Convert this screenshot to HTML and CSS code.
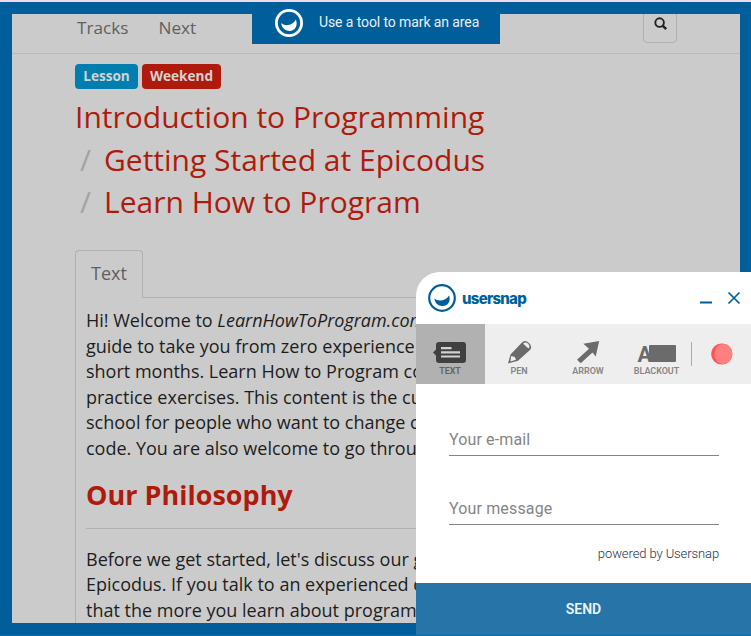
FILE: index.html
```html
<!DOCTYPE html>
<html lang="en">
<head>
<meta charset="utf-8">
<title>Introduction to Programming</title>
<link rel="stylesheet" href="styles.css">
</head>
<body>
<main class="page">
  <nav class="nav">
    <a>Tracks</a><a>Next</a>
    <button class="search" aria-label="Search"><svg width="14" height="14" viewBox="0 0 14 14"><circle cx="5.6" cy="5.6" r="4.3" fill="none" stroke="#222" stroke-width="1.9"/><path d="M8.6 8.6 12.2 12.2" stroke="#222" stroke-width="2.4"/></svg></button>
  </nav>
  <article class="content">
    <div class="badges"><span class="badge">Lesson</span><span class="badge red">Weekend</span></div>
    <h1 class="trail">
      <span>Introduction to Programming</span>
      <span><i>/</i>Getting Started at Epicodus</span>
      <span><i>/</i>Learn How to Program</span>
    </h1>
    <div class="tabs"><span class="tab">Text</span></div>
    <section class="text">
      <p>Hi! Welcome to <em>LearnHowToProgram.com</em><br>guide to take you from zero experience<br>short months. Learn How to Program co<br>practice exercises. This content is the cu<br>school for people who want to change c<br>code. You are also welcome to go throu</p>
      <h2>Our Philosophy</h2>
      <p>Before we get started, let's discuss our g<br>Epicodus. If you talk to an experienced d<br>that the more you learn about program</p>
    </section>
  </article>
</main>

<div class="hint">
  <svg width="28" height="28" viewBox="0 0 28 28"><circle cx="14" cy="14" r="12.6" fill="none" stroke="#fff" stroke-width="2.8"/><path d="M6.2 14.1C9 17.2 17.6 17.3 20.8 10.5C23.4 16.5 20 22 14.5 22C10 22 6.7 18.7 6.2 14.1Z" fill="#fff"/></svg>
  <span>Use a tool to mark an area</span>
</div>

<aside class="panel">
  <header class="head">
    <svg width="28" height="28" viewBox="0 0 28 28"><circle cx="14" cy="14" r="12.8" fill="none" stroke="#005f9a" stroke-width="2.2"/><path d="M6.4 14.5C9.5 17.5 17.8 17.3 21 11.5C23.2 17 20 22 14.5 22C10 22 6.8 19 6.4 14.5Z" fill="#005f9a"/></svg>
    <b>usersnap</b>
    <svg class="controls" width="42" height="16" viewBox="0 0 42 16" fill="none" stroke="#005f9a"><path d="M1 12.6H13" stroke-width="2"/><path d="M29.5 2.5 40.5 13.5M40.5 2.5 29.5 13.5" stroke-width="1.7"/></svg>
  </header>
  <div class="tools">
    <div class="tool on"><svg width="34" height="24" viewBox="0 0 34 24"><path d="M6 2H30Q33 2 33 5V20Q33 23 30 23H6Q3 23 3 20V15.5L0 12.5L3 9.5V5Q3 2 6 2Z" fill="#404040"/><path d="M8 8.2H18.5M8 12.3H27M8 16.5H27" stroke="#d2d2d2" stroke-width="2.2"/></svg>TEXT</div>
    <div class="tool"><svg width="34" height="24" viewBox="-1 0 34 24"><path d="M5 23.5 7.5 14.5 18.5 3Q22-.8 26 3Q30 7 26.7 10.3L15 20.8Z" fill="#6b6b6b"/><path d="M20.2 3.7Q22.5 1.2 25.1 3.7Q27.6 6.5 25.4 8.6Z" fill="#eee"/><path d="M8.2 16 11.8 17 13 19.8 7.4 21.6Z" fill="#eee"/></svg>PEN</div>
    <div class="tool"><svg width="34" height="24" viewBox="0 0 34 24"><path d="M12.3 3.8 28.2 1 24.7 16.5 21.5 12.6 9.7 23.2 6 19.8 18 8.7Z" fill="#6b6b6b"/></svg>ARROW</div>
    <div class="tool blackout"><span class="mark"><b>A</b><i></i></span>BLACKOUT</div>
    <span class="rule"></span>
    <svg class="dot" width="22" height="22" viewBox="0 0 22 22"><circle cx="10.8" cy="11" r="10.6" fill="#ff5555"/><ellipse cx="12.4" cy="11" rx="9" ry="10.2" fill="#ff8080"/></svg>
  </div>
  <form class="form">
    <div class="field">Your e-mail</div>
    <div class="field message">Your message</div>
    <div class="powered">powered by Usersnap</div>
  </form>
  <div class="send">SEND</div>
</aside>
</body>
</html>
```
FILE: styles.css
```css
* { box-sizing: border-box; }
body {
  margin: 0;
  width: 751px;
  height: 636px;
  overflow: hidden;
  position: relative;
  font-family: "Open Sans", sans-serif;
  background: linear-gradient(#efdbea 0 2px, #005f9a 2px 635px, #0a6cae 635px);
  padding: 14px 11px 13px 12px;
}
.page { height: 609px; background: #cbcbcb; overflow: hidden; }
.nav {
  height: 40px;
  border-bottom: 1px solid #bababa;
  padding: 0 63px 0 65px;
  display: flex;
  align-items: flex-start;
  gap: 30px;
  font-size: 17.2px;
  line-height: 27px;
  color: #606060;
}
.search {
  margin: -6px 0 0 auto;
  width: 34px;
  height: 35px;
  border: 1px solid #b0b0b0;
  border-radius: 4px;
  background: none;
  padding: 8px 0 0 9.5px;
  display: flex;
}
.content { margin-left: 63px; }
.badges { display: flex; gap: 4px; padding-top: 10px; }
.badge {
  width: 63px;
  height: 25px;
  border-radius: 4px;
  background: #007faf;
  color: #d2d2d2;
  font-size: 13.6px;
  font-weight: 700;
  line-height: 24px;
  text-align: center;
}
.badge.red { width: 79px; background: #ae1b0d; }
.trail {
  margin: 7px 0 0;
  font-size: 30px;
  font-weight: 400;
  line-height: 42.7px;
  color: #ae1b0d;
  white-space: nowrap;
}
.trail span { display: block; }
.trail i { display: inline-block; width: 29px; padding-left: 5px; font-style: normal; color: #a3a3a3; }
.tabs { margin-top: 26px; height: 48px; border-bottom: 1px solid #b0b0b0; }
.tab {
  display: block;
  width: 68px;
  height: 48px;
  border: 1px solid #b0b0b0;
  border-bottom: 0;
  border-radius: 4px 4px 0 0;
  background: #cbcbcb;
  padding-left: 15px;
  font-size: 18px;
  line-height: 44px;
  color: #606060;
}
.text {
  border-left: 1px solid #b0b0b0;
  padding: 10px 10px 0;
  height: 340px;
  color: #1d1d1d;
  white-space: nowrap;
}
.text p { margin: 0; font-size: 18px; line-height: 25.6px; }
.text h2 {
  margin: 15px 0 18px;
  height: 52px;
  border-bottom: 1px solid #b0b0b0;
  font-size: 27px;
  line-height: 35px;
  color: #ae1b0d;
}
.hint {
  position: absolute;
  left: 252px;
  top: 2px;
  width: 248px;
  height: 42px;
  background: #005f9a;
  color: #e8f0f5;
  display: flex;
  align-items: center;
  padding-left: 23px;
  gap: 16px;
  font: 14px Roboto, sans-serif;
  letter-spacing: -.1px;
  white-space: nowrap;
}
.hint span { margin-top: -2px; }
.panel {
  position: absolute;
  left: 416px;
  top: 272px;
  width: 335px;
  height: 363px;
  background: #fff;
  border-radius: 24px 0 0;
  overflow: hidden;
  font-family: Roboto, sans-serif;
}
.head { height: 52px; display: flex; align-items: center; padding: 0 10px 0 12px; gap: 6px; color: #005f9a; }
.head b { font: 800 15px Inter, sans-serif; letter-spacing: -.75px; }
.controls { margin-left: auto; }
.tools { height: 60px; background: #eee; display: flex; }
.tool {
  width: 69px;
  padding: 16px 1px 0 0;
  display: flex;
  flex-direction: column;
  align-items: center;
  gap: 1px;
  font-size: 9px;
  font-weight: 600;
  line-height: 12px;
  letter-spacing: -.05px;
  color: #858585;
}
.tool svg { flex: none; }
.tool.on { background: #b1b1b1; color: #626262; }
.tool.blackout { width: 68px; }
.mark { width: 38px; height: 24px; display: flex; padding-top: 5px; color: #6b6b6b; }
.mark b { font-size: 21.5px; line-height: 19px; width: 11px; font-weight: 700; }
.mark i { width: 27px; height: 17px; border-radius: 1px; background: #6b6b6b; position: relative; }
.rule { width: 1px; height: 24px; margin-top: 18px; background: #aaa; }
.dot { margin: 19px 0 0 19px; }
.form { height: 199px; padding: 42px 32px 0 33px; }
.field { height: 30px; margin-bottom: 39px; border-bottom: 1px solid #858585; font-size: 16px; line-height: 27px; letter-spacing: .13px; color: #858585; }
.field.message { letter-spacing: .15px; }
.powered { margin-top: -20px; text-align: right; font-size: 13px; font-weight: 300; line-height: 20px; letter-spacing: -.1px; color: #253247; }
.send { height: 52px; background: #2775a8; color: #eef4f8; text-align: center; font-size: 14px; font-weight: 600; line-height: 52px; }
```
